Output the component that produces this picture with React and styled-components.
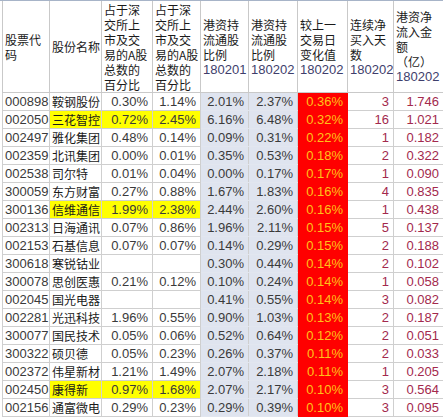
import React from 'react';
import styled, { createGlobalStyle } from 'styled-components';

const GlobalStyle = createGlobalStyle`
  html, body {
    margin: 0;
    padding: 0;
    background: #ffffff;
  }
  body {
    font-family: 'Liberation Sans', 'Noto Sans CJK SC', sans-serif;
  }
`;

const Sheet = styled.div`
  width: 443px;
  height: 418px;
  overflow: hidden;
  border-top: 1px solid #a7b4c8;
  padding-left: 2px;
  box-sizing: border-box;
  background: #ffffff;
`;

const Table = styled.table`
  border-collapse: collapse;
  table-layout: fixed;
  width: 441px;
  font-size: 13px;
  color: #3a3a3a;
`;

const HeadCell = styled.th`
  height: 91px;
  padding: 0 1px 0 2px;
  border: 1px solid #c9c9c9;
  border-top: none;
  text-align: left;
  vertical-align: middle;
  font-weight: normal;
  font-size: 12px;
  line-height: 15px;
  white-space: nowrap;
  color: #1a1a1a;
  font-family: 'Noto Sans CJK SC', 'Liberation Sans', sans-serif;
  overflow: hidden;
`;

const HeadLine = styled.div`
  height: 15px;
  line-height: 15px;
`;

const HeadDate = styled.div`
  height: 15px;
  line-height: 15px;
  font-family: 'Liberation Sans', sans-serif;
  font-size: 13px;
  color: #3e3e6c;
`;

const Row = styled.tr`
  height: 18px;
`;

const Cell = styled.td`
  padding: 0 ${p => (p.$align === 'right' ? '4px' : '2px')};
  border: 1px solid #cfcfcf;
  border-color: ${p => (p.$tone === 'red' ? '#ff0000' : p.$tone === 'blue' ? '#e2e6ef #cfcfcf' : '#cfcfcf')};
  background: ${p =>
    p.$tone === 'red' ? '#ff0000' : p.$tone === 'blue' ? '#dfe4ef' : p.$tone === 'yellow' ? '#ffff00' : 'transparent'};
  color: ${p => (p.$tone === 'red' ? '#ffc21a' : p.$tone === 'flow' ? '#a3294d' : '#3a3a3a')};
  text-align: ${p => p.$align || 'left'};
  white-space: nowrap;
  overflow: hidden;
  line-height: 17px;
  height: 17px;
`;

const NameText = styled.span`
  display: inline-block;
  vertical-align: top;
  height: 17px;
  line-height: 17px;
  font-family: 'Noto Sans CJK SC', sans-serif;
  font-size: 12px;
  color: #1a1a1a;
`;

const widths = [47, 52, 51, 48, 48, 49, 50, 46, 50];

const shareHeader = ['占于深', '交所上', '市及交', '易的A股', '总数的', '百分比'];

const headers = [
  { lines: ['股票代', '码'] },
  { lines: ['股份名称'] },
  { lines: shareHeader },
  { lines: shareHeader },
  { lines: ['港资持', '流通股', '比例'], date: '180201' },
  { lines: ['港资持', '流通股', '比例'], date: '180202' },
  { lines: ['较上一', '交易日', '变化值'], date: '180202' },
  { lines: ['连续净', '买入天', '数'], date: '180202' },
  { lines: ['港资净', '流入金', '额', '（亿）'], date: '180202' },
];

const rows = [
  ['000898', '鞍钢股份', '0.30%', '1.14%', '2.01%', '2.37%', '0.36%', '3', '1.746'],
  ['002050', '三花智控', '0.72%', '2.45%', '6.16%', '6.48%', '0.32%', '16', '1.021', true],
  ['002497', '雅化集团', '0.48%', '0.14%', '0.09%', '0.31%', '0.22%', '1', '0.182'],
  ['002359', '北讯集团', '0.00%', '0.01%', '0.35%', '0.53%', '0.18%', '2', '0.322'],
  ['002538', '司尔特', '0.01%', '0.04%', '0.00%', '0.17%', '0.17%', '1', '0.090'],
  ['300059', '东方财富', '0.27%', '0.88%', '1.67%', '1.83%', '0.16%', '4', '0.835'],
  ['300136', '信维通信', '1.99%', '2.38%', '2.44%', '2.60%', '0.16%', '1', '0.438', true],
  ['002313', '日海通讯', '0.07%', '0.86%', '1.96%', '2.11%', '0.15%', '5', '0.137'],
  ['002153', '石基信息', '0.07%', '0.07%', '0.14%', '0.29%', '0.15%', '2', '0.188'],
  ['300618', '寒锐钴业', '', '', '0.30%', '0.44%', '0.14%', '2', '0.102'],
  ['300078', '思创医惠', '0.21%', '0.12%', '0.10%', '0.24%', '0.14%', '1', '0.058'],
  ['002045', '国光电器', '', '', '0.41%', '0.55%', '0.14%', '3', '0.082'],
  ['002281', '光迅科技', '1.96%', '0.55%', '0.90%', '1.03%', '0.13%', '2', '0.187'],
  ['300077', '国民技术', '0.05%', '0.06%', '0.52%', '0.64%', '0.12%', '2', '0.051'],
  ['300322', '硕贝德', '0.05%', '0.23%', '0.26%', '0.37%', '0.11%', '2', '0.033'],
  ['002372', '伟星新材', '1.21%', '1.49%', '2.07%', '2.18%', '0.11%', '1', '0.205'],
  ['002450', '康得新', '0.97%', '1.68%', '2.07%', '2.17%', '0.10%', '3', '0.564', true],
  ['002156', '通富微电', '0.29%', '0.23%', '0.29%', '0.39%', '0.10%', '3', '0.095'],
];

// which tone each column gets (yellow is applied per row to cols 1-3)
const columnTone = [null, null, null, null, 'blue', 'blue', 'red', 'flow', 'flow'];

export default function App() {
  return (
    <>
      <GlobalStyle />
      <Sheet>
        <Table>
          <colgroup>
            {widths.map((w, i) => (
              <col key={i} style={{ width: w }} />
            ))}
          </colgroup>
          <thead>
            <tr>
              {headers.map((h, i) => (
                <HeadCell key={i}>
                  {h.lines.map((line, j) => (
                    <HeadLine key={j}>{line}</HeadLine>
                  ))}
                  {h.date && <HeadDate>{h.date}</HeadDate>}
                </HeadCell>
              ))}
            </tr>
          </thead>
          <tbody>
            {rows.map(row => {
              const highlight = row[9];
              return (
                <Row key={row[0]}>
                  {row.slice(0, 9).map((value, i) => {
                    const tone = highlight && i >= 1 && i <= 3 ? 'yellow' : columnTone[i];
                    return (
                      <Cell key={i} $tone={tone} $align={i >= 2 ? 'right' : 'left'}>
                        {i === 1 ? <NameText>{value}</NameText> : value}
                      </Cell>
                    );
                  })}
                </Row>
              );
            })}
          </tbody>
        </Table>
      </Sheet>
    </>
  );
}
